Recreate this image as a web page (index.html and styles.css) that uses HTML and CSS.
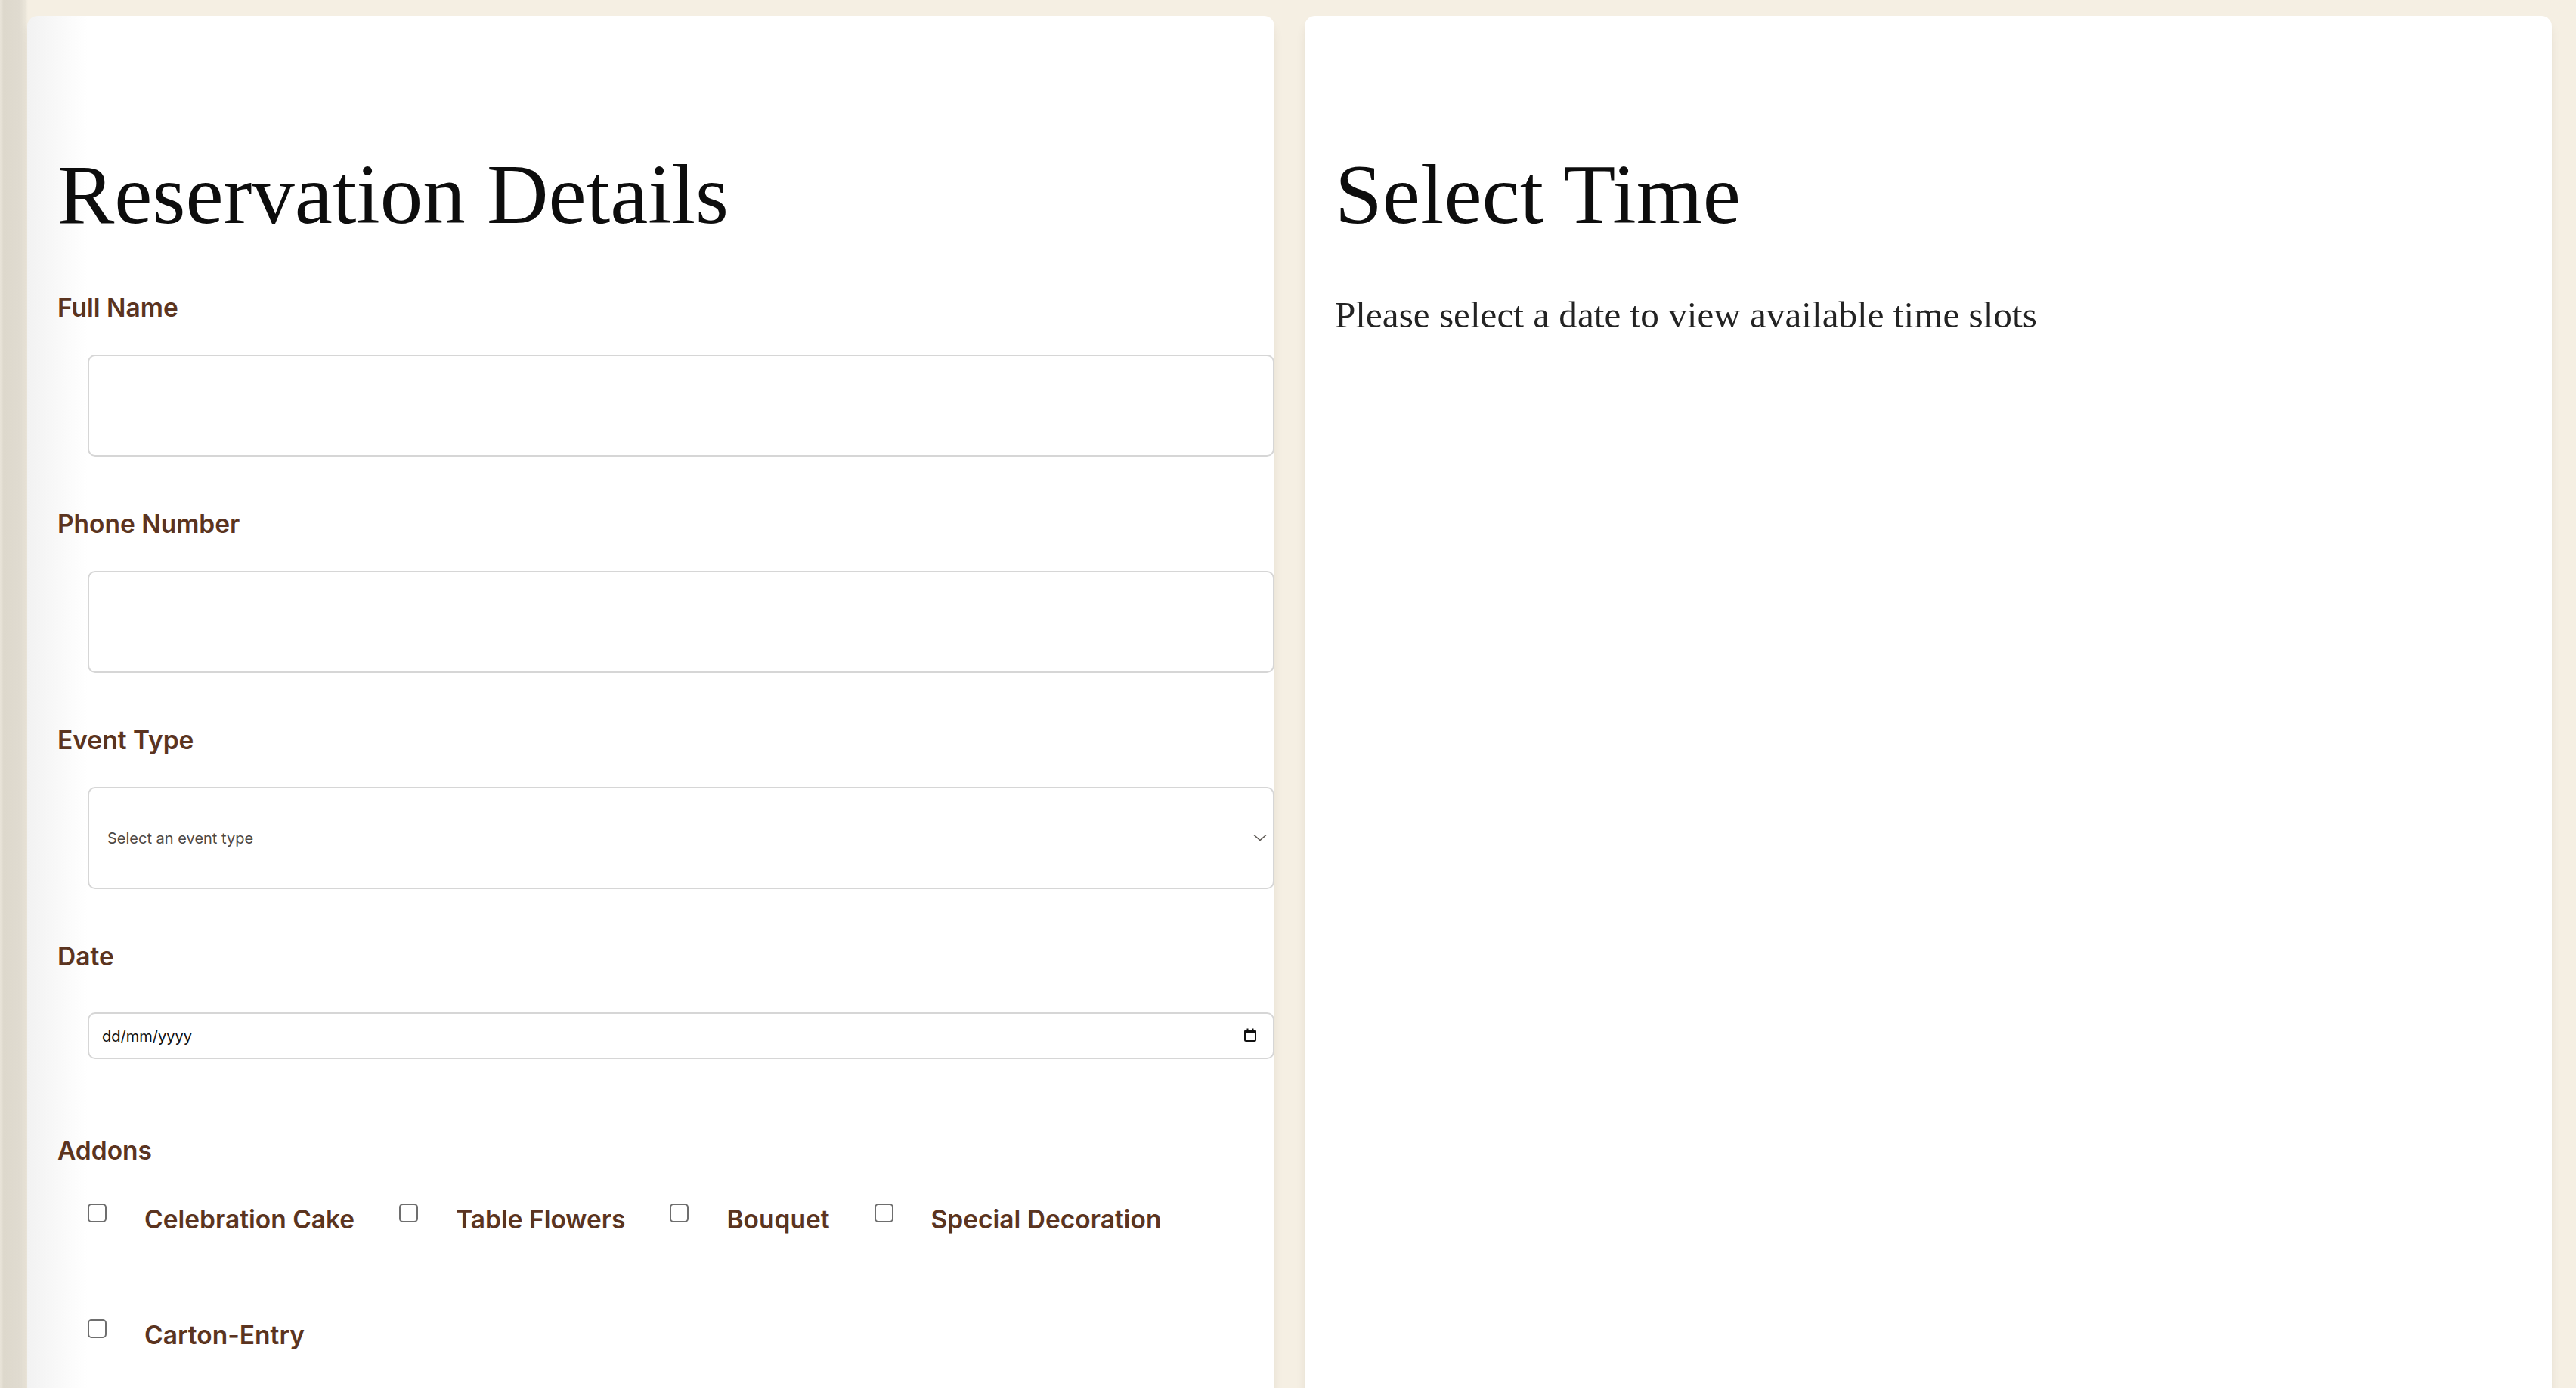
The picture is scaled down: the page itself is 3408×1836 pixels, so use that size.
FILE: index.html
```html
<!DOCTYPE html>
<html lang="en">
<head>
<meta charset="utf-8">
<title>Reservation</title>
<link rel="stylesheet" href="styles.css">
</head>
<body>
<main class="page">
  <section class="card card-form">
    <h1 class="title">Reservation Details</h1>

    <div class="field">
      <label class="label">Full Name</label>
      <div class="input"></div>
    </div>

    <div class="field">
      <label class="label">Phone Number</label>
      <div class="input"></div>
    </div>

    <div class="field">
      <label class="label">Event Type</label>
      <div class="input select">
        <span class="select-text">Select an event type</span>
        <svg class="chevron" width="18" height="10" viewBox="0 0 18 10"><path d="M1 1.5 L9 8.5 L17 1.5" fill="none" stroke="#5a5550" stroke-width="1.6"/></svg>
      </div>
    </div>

    <div class="field field-date">
      <label class="label">Date</label>
      <div class="input date">
        <span class="date-text">dd/mm/yyyy</span>
        <svg class="cal" width="16" height="18" viewBox="0 0 16 18"><rect x="1" y="3" width="14" height="14" rx="1.5" fill="none" stroke="#111" stroke-width="2"/><rect x="1" y="3" width="14" height="4" fill="#111"/><rect x="3.5" y="0.5" width="2" height="4" fill="#111"/><rect x="10.5" y="0.5" width="2" height="4" fill="#111"/></svg>
      </div>
    </div>

    <div class="field field-addons">
      <label class="label">Addons</label>
      <div class="addons">
        <div class="addon"><span class="box"></span><span class="addon-text">Celebration Cake</span></div>
        <div class="addon"><span class="box"></span><span class="addon-text">Table Flowers</span></div>
        <div class="addon"><span class="box"></span><span class="addon-text">Bouquet</span></div>
        <div class="addon"><span class="box"></span><span class="addon-text">Special Decoration</span></div>
        <div class="addon"><span class="box"></span><span class="addon-text">Carton-Entry</span></div>
      </div>
    </div>
  </section>

  <section class="card card-time">
    <h1 class="title">Select Time</h1>
    <p class="hint">Please select a date to view available time slots</p>
  </section>
</main>
</body>
</html>
```

FILE: styles.css
```css
html, body {
  margin: 0;
  height: 100%;
  overflow: hidden;
}

body {
  background:
    linear-gradient(to right, #e9e4d9 0px, #ddd8cc 5px, #e0dbd0 26px, #ebe6da 34px, rgba(245, 239, 227, 0) 37px),
    #f5efe3;
}

.page {
  display: flex;
  gap: 40px;
  padding: 21px 32px 0 36px;
  box-sizing: border-box;
}

.card {
  flex: 1 1 0;
  min-width: 0;
  min-height: 1900px;
  box-sizing: border-box;
  padding: 40px;
  background: #ffffff;
  border-radius: 14px;
  box-shadow: 0 10px 15px -3px rgba(60, 40, 20, 0.10), 0 4px 6px -4px rgba(60, 40, 20, 0.08);
}

.card-form {
  background: linear-gradient(to right, #f2f2f2 0px, #f7f7f7 30px, #ffffff 80px);
}

.title {
  margin: 131px 0 0;
  font-family: "Liberation Serif", "Times New Roman", serif;
  font-weight: 400;
  font-size: 113px;
  line-height: 1.15;
  color: #0d0d0d;
}

.card-form .title {
  margin-bottom: 65px;
}

.field {
  display: flex;
  flex-direction: column;
  margin-top: 69px;
}

.card-form .title + .field {
  margin-top: 0;
}

.label {
  display: block;
  margin: 0 0 41px;
  font-family: Inter, "Noto Sans", sans-serif;
  font-weight: 600;
  font-size: 33.5px;
  line-height: 1.22;
  color: #5b3420;
}

.input {
  box-sizing: border-box;
  width: 100%;
  height: 135px;
  margin-left: 40px;
  border: 2px solid #d6d6d6;
  border-radius: 10px;
  background: #ffffff;
}

.select {
  display: flex;
  align-items: center;
  justify-content: space-between;
  padding: 0 8px 0 24px;
}

.select-text {
  font-family: Inter, "Noto Sans", sans-serif;
  font-size: 20px;
  color: #4e4946;
  margin-top: 2px;
}

.chevron {
  display: block;
  margin-top: 0;
}

.field-date .label {
  margin-bottom: 54px;
}

.date {
  height: 62px;
  display: flex;
  align-items: center;
  justify-content: space-between;
  padding: 0 22px 0 17px;
}

.date-text {
  font-family: Inter, "Noto Sans", sans-serif;
  font-size: 20px;
  color: #111111;
  margin-top: 2px;
}

.cal {
  display: block;
  margin-top: -2px;
}

.field-addons {
  margin-top: 101px;
}

.field-addons .label {
  margin-bottom: 50px;
}

.addons {
  display: flex;
  flex-wrap: wrap;
  column-gap: 59px;
  row-gap: 112px;
  padding-left: 40px;
}

.addon {
  display: flex;
  align-items: flex-start;
  gap: 50px;
}

.box {
  box-sizing: border-box;
  width: 25px;
  height: 25px;
  margin-top: -1px;
  border: 2px solid #6e6e6e;
  border-radius: 5px;
  background: #ffffff;
  flex: none;
}

.addon-text {
  font-family: Inter, "Noto Sans", sans-serif;
  font-weight: 600;
  font-size: 33.5px;
  line-height: 1.22;
  color: #5b3420;
}

.card-time .title {
  margin-bottom: 0;
}

.hint {
  margin: 67px 0 0;
  font-family: "Liberation Serif", "Times New Roman", serif;
  font-size: 49.2px;
  line-height: 1.15;
  color: #232323;
}
```
